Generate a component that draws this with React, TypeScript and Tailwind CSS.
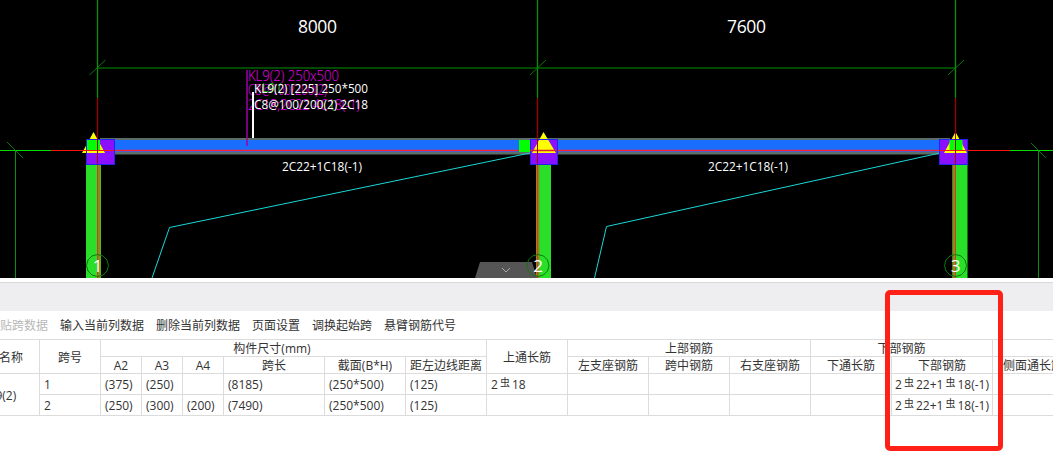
const FONT = { fontFamily: '"Open Sans", "Noto Sans CJK SC", sans-serif' };
const CAD_GREEN = '#0a8f0a';

const toolbarItems = ['粘贴跨数据', '输入当前列数据', '删除当前列数据', '页面设置', '调换起始跨', '悬臂钢筋代号'];
const colWidths = [81, 61, 41, 41, 41, 101, 81, 81, 81, 81, 81, 81, 81, 101, 81, 121];

// Regular polygon, the CAD view draws its axis circles this way
const ring = (cx: number, cy: number, r: number) =>
    Array.from({ length: 12 }, (_, i) => {
        const a = (i / 12) * Math.PI * 2;
        return `${cx + r * Math.cos(a)},${cy + r * Math.sin(a)}`;
    }).join(' ');

const Node = ({ left, right, apex, triLeft, triRight, green }: { left: number; right: number; apex: number; triLeft: number; triRight: number; green?: number }) => (
    <g>
        <rect x={left + 0.5} y={139.5} width={right - left} height={25} fill="#8a10ff" />
        <polygon points={`${apex},132 ${triLeft},153 ${triRight},153`} fill="#ffff00" />
        {green !== undefined && <rect x={green} y={140} width={13} height={11} fill="#00ff00" />}
        <rect x={left + 0.5} y={139.5} width={right - left} height={25} fill="none" stroke="#2222ee" />
    </g>
);

const AxisLine = ({ x, tickX }: { x: number; tickX: number }) => (
    <g>
        <line x1={x} y1={0} x2={x} y2={98} stroke={CAD_GREEN} strokeWidth={1.3} />
        <line x1={x} y1={98} x2={x} y2={140} stroke="#a00000" strokeWidth={1.3} />
        <line x1={tickX - 8} y1={75} x2={tickX + 8} y2={60} stroke="#0a7a0a" />
    </g>
);

const AxisBubble = ({ x, label }: { x: number; label: string }) => (
    <g>
        <polygon points={ring(x, 265.5, 11)} fill="none" stroke="#0a7a0a" />
        <text x={x} y={272} fill="#fff" fontSize={17} textAnchor="middle" fontFamily="Open Sans">{label}</text>
    </g>
);

const CadColumn = ({ left, olive, red }: { left: number; olive: number; red: number }) => (
    <g>
        <rect x={left} y={164} width={15} height={114} fill="#2adf2a" />
        <rect x={olive} y={164} width={3.5} height={114} fill="#8a8a20" />
        <line x1={red} y1={164} x2={red} y2={278} stroke="#d04020" />
    </g>
);

const CadView = () => (
    <div className="h-[278px] bg-black">
        <svg width={1053} height={278} className="block">
            <line x1={97} y1={68} x2={956} y2={68} stroke="#004a00" strokeWidth={2} />
            <AxisLine x={97.5} tickX={97.5} />
            <AxisLine x={537.5} tickX={538} />
            <AxisLine x={955.5} tickX={956} />

            {/* side axes */}
            <line x1={0} y1={150.5} x2={51} y2={150.5} stroke="#00e000" />
            <line x1={51} y1={150.5} x2={97} y2={150.5} stroke="#ff1010" />
            <line x1={967} y1={150.5} x2={1010} y2={150.5} stroke="#ff1010" />
            <line x1={1010} y1={150.5} x2={1053} y2={150.5} stroke="#00e000" />
            <line x1={15.5} y1={150} x2={15.5} y2={278} stroke={CAD_GREEN} />
            <line x1={1038.5} y1={150} x2={1038.5} y2={278} stroke={CAD_GREEN} />
            <line x1={7} y1={142} x2={23} y2={158} stroke="#0a7a0a" />
            <line x1={1031} y1={143} x2={1046} y2={158} stroke="#0a7a0a" />

            {/* beam */}
            <rect x={100} y={138} width={850} height={16.5} fill="#5c6e68" />
            <rect x={100} y={140} width={850} height={12} fill="#1a6eff" />
            <line x1={100} y1={150.5} x2={945} y2={150.5} stroke="#ff2030" strokeWidth={1.5} />

            {/* columns */}
            <CadColumn left={86} olive={97} red={97.5} />
            <CadColumn left={536} olive={536} red={537.5} />
            <CadColumn left={952.5} olive={952.5} red={955.5} />

            {/* cyan outlines */}
            <polyline points="152,278 169.5,227.5 530,153" fill="none" stroke="#18d8d8" />
            <polyline points="594.5,278 606.5,226.5 940,153" fill="none" stroke="#18d8d8" />

            <rect x={519} y={140} width={12} height={12} fill="#00ff00" />
            <Node left={86} right={114} apex={93.5} triLeft={82} triRight={105} green={87} />
            <Node left={530} right={557} apex={543.5} triLeft={532} triRight={556} />
            <Node left={939} right={967} apex={955.5} triLeft={944} triRight={967} green={949.5} />
            <line x1={530} y1={150.5} x2={557} y2={150.5} stroke="#e02030" strokeWidth={1.5} />
            <line x1={82} y1={150.5} x2={114} y2={150.5} stroke="#ff1010" />
            <line x1={939} y1={150.5} x2={967} y2={150.5} stroke="#ff1010" />
            <line x1={97.5} y1={132} x2={97.5} y2={164} stroke="#a00000" />
            <line x1={537.5} y1={132} x2={537.5} y2={164} stroke="#a00000" />
            <line x1={955.5} y1={132} x2={955.5} y2={164} stroke="#a00000" />

            {/* collapse handle */}
            <polygon points="475,278 480,262 532,262 537,278" fill="#555555" />
            <polyline points="502,268 506,272 510,268" fill="none" stroke="#a8a8a8" />

            <AxisBubble x={97.5} label="1" />
            <AxisBubble x={538} label="2" />
            <AxisBubble x={955.5} label="3" />

            {/* magenta plan labels */}
            <line x1={247} y1={70} x2={247} y2={146} stroke="#a000a0" strokeWidth={1.5} />
            <g fill="#f000f0" fontSize={15} fontWeight={300} fontFamily="Open Sans">
                <text x={248} y={81} textLength={91} lengthAdjust="spacingAndGlyphs">KL9(2) 250x500</text>
                <text x={248} y={95} textLength={79} lengthAdjust="spacingAndGlyphs">C8@100/200(2)</text>
                <text x={248} y={110} textLength={112} lengthAdjust="spacingAndGlyphs">2C18;2C22 4C18(-1)</text>
            </g>
            <g fill="#10a010" fontSize={12} fontFamily="Open Sans">
                <text x={262} y={92}>L9</text>
                <text x={278} y={92}>(</text>
                <text x={331} y={109}>(</text>
            </g>
            <line x1={253} y1={92} x2={253} y2={138} stroke="#fff" strokeWidth={2} />
            <g fill="#fff" fontSize={12} fontFamily="Open Sans">
                <text x={254} y={93} textLength={114} lengthAdjust="spacingAndGlyphs">KL9(2) [225] 250*500</text>
                <text x={254} y={109} textLength={114} lengthAdjust="spacingAndGlyphs">C8@100/200(2) 2C18</text>
            </g>

            <g fill="#fff" fontFamily="Open Sans">
                <text x={298} y={33} fontSize={17.5} textLength={39}>8000</text>
                <text x={727} y={33} fontSize={17.5} textLength={39}>7600</text>
                <text x={282} y={171} fontSize={12} textLength={80} lengthAdjust="spacingAndGlyphs">2C22+1C18(-1)</text>
                <text x={708} y={171} fontSize={12} textLength={80} lengthAdjust="spacingAndGlyphs">2C22+1C18(-1)</text>
            </g>
        </svg>
    </div>
);

// Rebar grade mark, sits small and raised in the line
const Bar = () => <span className="relative top-[-3px] mx-[2px] text-[10px]">虫</span>;

const Th = ({ children, colSpan, rowSpan, className = '' }: { children?: React.ReactNode; colSpan?: number; rowSpan?: number; className?: string }) => (
    <td colSpan={colSpan} rowSpan={rowSpan} className={`border border-[#dcdcdc] p-0 pt-[2px] text-center align-middle leading-none whitespace-nowrap ${className}`}>
        {children}
    </td>
);

const Td = ({ children, rowSpan, center }: { children?: React.ReactNode; rowSpan?: number; center?: boolean }) => (
    <td rowSpan={rowSpan} className={`border border-[#dcdcdc] pt-[2px] pb-0 leading-none whitespace-nowrap ${center ? 'px-0 text-center' : 'px-1'}`}>
        {children}
    </td>
);

const rows = [
    { span: '1', a2: '(375)', a3: '(250)', a4: '', len: '(8185)', size: '(250*500)', edge: '(125)', top: true },
    { span: '2', a2: '(250)', a3: '(300)', a4: '(200)', len: '(7490)', size: '(250*500)', edge: '(125)', top: false },
];

const SpanTable = () => (
    <table className="ml-[-42px] table-fixed border-collapse text-[12px] text-[#333]" style={{ width: colWidths.reduce((a, b) => a + b, 0) }}>
        <colgroup>
            {colWidths.map((w, i) => <col key={i} style={{ width: w }} />)}
        </colgroup>
        <tbody>
            <tr className="h-[17px]">
                <Th rowSpan={2}>构件名称</Th>
                <Th rowSpan={2}>跨号</Th>
                <Th colSpan={6} className="pr-[43px]">构件尺寸(mm)</Th>
                <Th rowSpan={2}>上通长筋</Th>
                <Th colSpan={3}>上部钢筋</Th>
                <Th colSpan={2}>下部钢筋</Th>
                <Th colSpan={2}>侧面钢筋</Th>
            </tr>
            <tr className="h-[17px]">
                <Th>A2</Th>
                <Th>A3</Th>
                <Th>A4</Th>
                <Th>跨长</Th>
                <Th>截面(B*H)</Th>
                <Th>距左边线距离</Th>
                <Th>左支座钢筋</Th>
                <Th>跨中钢筋</Th>
                <Th>右支座钢筋</Th>
                <Th>下通长筋</Th>
                <Th>下部钢筋</Th>
                <Th>侧面通长筋</Th>
                <Th>侧面原位筋</Th>
            </tr>
            {rows.map((r, i) => (
                <tr key={r.span} className="h-[21px]">
                    {i === 0 && <Td rowSpan={2} center>KL9(2)</Td>}
                    <Td>{r.span}</Td>
                    <Td>{r.a2}</Td>
                    <Td>{r.a3}</Td>
                    <Td>{r.a4}</Td>
                    <Td>{r.len}</Td>
                    <Td>{r.size}</Td>
                    <Td>{r.edge}</Td>
                    <Td>{r.top && <>2<Bar />18</>}</Td>
                    <Td />
                    <Td />
                    <Td />
                    <Td />
                    <Td center>2<Bar />22+1<Bar />18(-1)</Td>
                    <Td />
                    <Td />
                </tr>
            ))}
        </tbody>
    </table>
);

const App = () => {
    return (
        <div className="relative h-[451px] w-[1053px] overflow-hidden bg-white" style={FONT}>
            <CadView />
            <div className="mt-[4px] h-[29px] border-t border-[#d8d8d8] bg-[#eeeef0]" />
            <div className="ml-[-12px] flex h-[28px] items-center gap-3 pt-[1px] text-[12px] text-[#333]">
                {toolbarItems.map((item, i) => (
                    <span key={item} className={i === 0 ? 'text-[#b8b8b8]' : ''}>{item}</span>
                ))}
            </div>
            <SpanTable />
            {/* hand-drawn highlight on the screenshot */}
            <div className="absolute left-[885px] top-[290px] h-[161px] w-[118px] rounded-[5px] border-[5px] border-[#ff2018]" />
        </div>
    );
};

export default App;
